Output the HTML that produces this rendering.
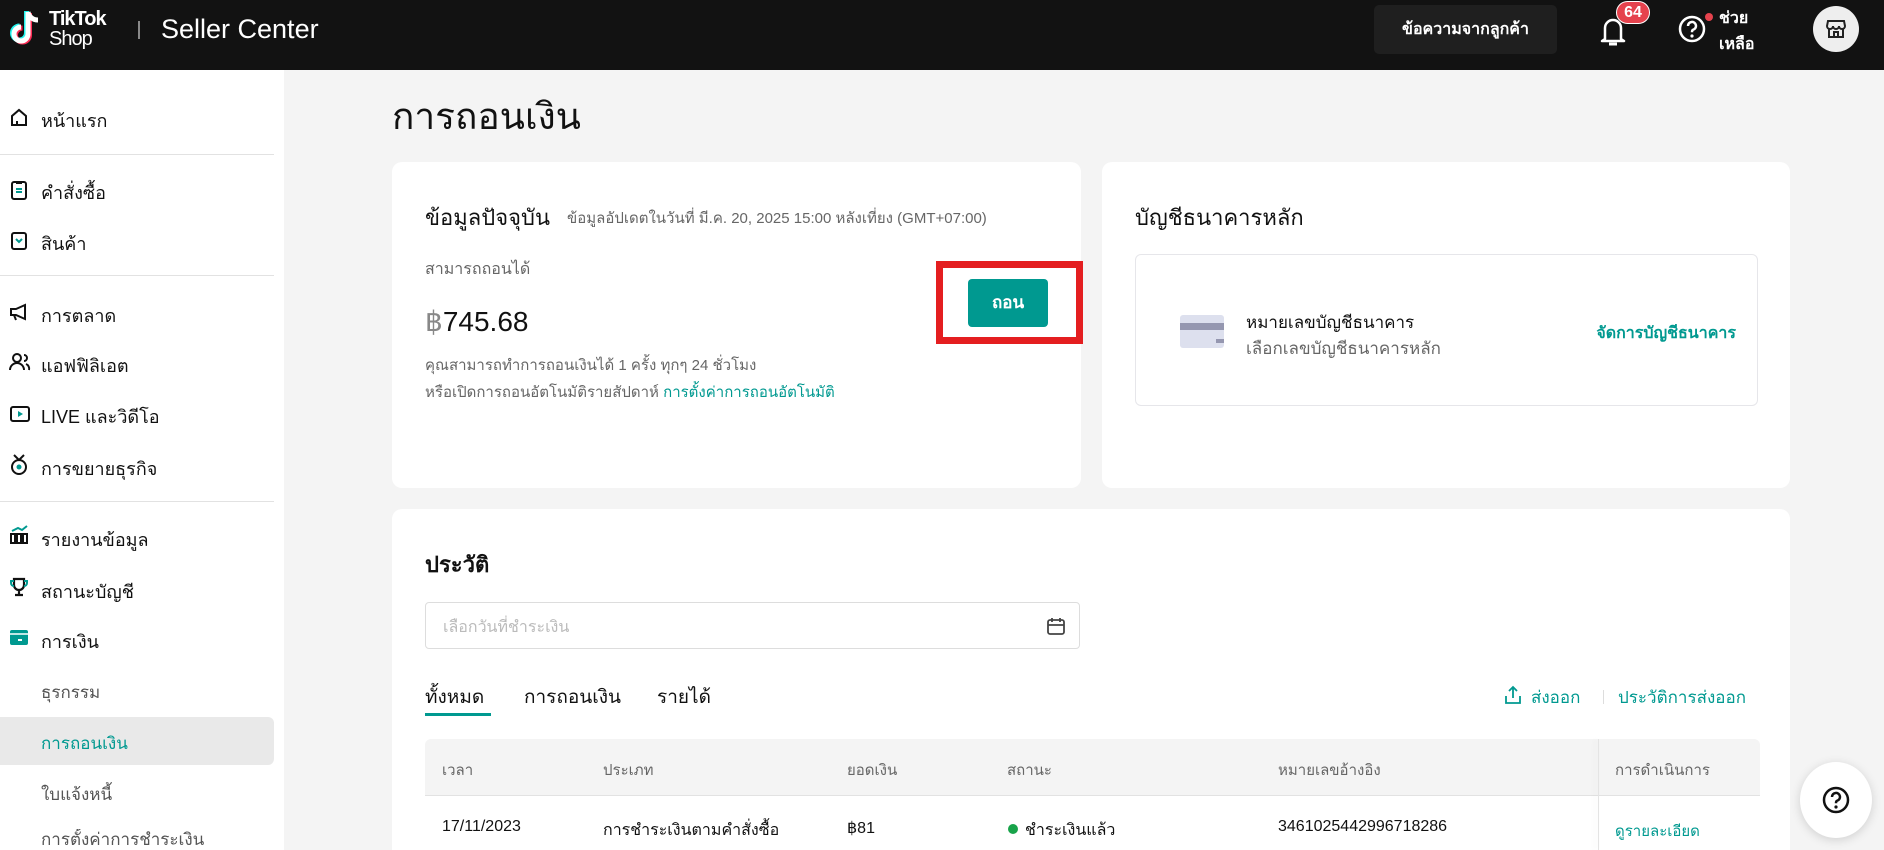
<!DOCTYPE html>
<html style="overflow:hidden;width:1884px;height:850px"><head><meta charset="utf-8">
<style>
*{box-sizing:border-box;margin:0;padding:0}
html,body{overflow:hidden}
body{width:1884px;height:850px;background:#f4f4f4;font-family:"Liberation Sans","Noto Sans CJK SC",sans-serif;color:#111}
#w{position:relative;width:1884px;height:850px;overflow:hidden}
.a{position:absolute;white-space:nowrap}
.hdr{position:absolute;left:0;top:0;width:1884px;height:70px;background:#121212}
.side{position:absolute;left:0;top:70px;width:284px;height:780px;background:#fff;overflow:hidden}
.si{position:absolute;left:41px;font-size:18px;color:#111}
.ic{position:absolute;left:9px}
.div{position:absolute;left:0;width:274px;height:1px;background:#e2e2e2}
.card{position:absolute;background:#fff;border-radius:10px;overflow:hidden}
.g{color:#666}
.t{color:#009990}
</style></head><body><div id="w">
<div class="hdr">
 <svg class="a" style="left:10px;top:9px" width="34" height="40" viewBox="0 0 34 40"><path d="M18 3v22a7 7 0 1 1-7-7" fill="none" stroke="#25f4ee" stroke-width="5" transform="translate(-1.5,-1)"/><path d="M18 3v22a7 7 0 1 1-7-7" fill="none" stroke="#fe2c55" stroke-width="5" transform="translate(1.5,1)"/><path d="M18 3v22a7 7 0 1 1-7-7M18 3c1 5 5 8 10 8" fill="none" stroke="#fff" stroke-width="5"/></svg>
 <div class="a" style="left:49px;top:10px;color:#fff;font-size:20px;font-weight:bold;line-height:19px;letter-spacing:-1px">TikTok</div>
 <div class="a" style="left:49px;top:29px;color:#fff;font-size:20px;line-height:20px;letter-spacing:-1px">Shop</div>
 <div class="a" style="left:138px;top:21px;width:2px;height:18px;background:#888"></div>
 <div class="a" style="left:161px;top:12px;color:#fff;font-size:27px;line-height:34px">Seller Center</div>
 <div class="a" style="left:1374px;top:5px;width:183px;height:49px;background:#1f1f1f;border-radius:5px;color:#fff;font-size:16px;font-weight:bold;text-align:center;line-height:49px">ข้อความจากลูกค้า</div>
 <svg class="a" style="left:1597px;top:14px" width="32" height="34" viewBox="0 0 32 34"><path d="M8 25V14a8 8 0 0 1 16 0v11l3 2H5z" fill="none" stroke="#fff" stroke-width="2.5" stroke-linejoin="round"/><path d="M12 30h8" stroke="#fff" stroke-width="3"/></svg>
 <div class="a" style="left:1616px;top:1px;width:34px;height:23px;background:#e5424d;border-radius:12px;color:#fff;font-size:16px;font-weight:bold;text-align:center;line-height:21px;border:1px solid #fff">64</div>
 <svg class="a" style="left:1676px;top:13px" width="32" height="32" viewBox="0 0 32 32"><circle cx="16" cy="16" r="12" fill="none" stroke="#fff" stroke-width="2.5"/><path d="M12 13a4 4 0 1 1 5 3.8c-1 .4-1 1.2-1 2.5" fill="none" stroke="#fff" stroke-width="2.5"/><circle cx="16" cy="23" r="1.6" fill="#fff"/></svg>
 <div class="a" style="left:1705px;top:13px;width:8px;height:8px;border-radius:50%;background:#e5424d"></div>
 <div class="a" style="left:1719px;top:6px;color:#fff;font-size:16px;font-weight:bold;line-height:26px">ช่วย<br>เหลือ</div>
 <div class="a" style="left:1813px;top:6px;width:46px;height:46px;border-radius:50%;background:#eee"></div>
 <svg class="a" style="left:1824px;top:17px" width="24" height="24" viewBox="0 0 24 24"><path d="M4 4h16l1 5a3 3 0 0 1-6 0 3 3 0 0 1-6 0 3 3 0 0 1-6 0zM5 11v9h14v-9M10 20v-5h4v5" fill="none" stroke="#222" stroke-width="2"/></svg>
</div>

<div class="side">
 <svg class="ic" style="top:38px" width="20" height="20" viewBox="0 0 20 20"><path d="M3 17V8l7-6 7 6v9zM8 17v-4" fill="none" stroke="#111" stroke-width="2"/></svg>
 <div class="si" style="top:36px">หน้าแรก</div>
 <div class="div" style="top:84px"></div>
 <svg class="ic" style="top:109px" width="20" height="22" viewBox="0 0 20 22"><rect x="3" y="3" width="14" height="17" rx="2" fill="none" stroke="#111" stroke-width="2"/><path d="M7 2h6v3H7z" fill="#111"/><path d="M7 10h6M7 13h6" stroke="#009990" stroke-width="2"/></svg>
 <div class="si" style="top:108px">คำสั่งซื้อ</div>
 <svg class="ic" style="top:160px" width="20" height="22" viewBox="0 0 20 22"><rect x="3" y="3" width="14" height="16" rx="2" fill="none" stroke="#111" stroke-width="2"/><path d="M7 9l3 3 3-3" fill="none" stroke="#009990" stroke-width="2"/></svg>
 <div class="si" style="top:159px">สินค้า</div>
 <div class="div" style="top:205px"></div>
 <svg class="ic" style="top:232px" width="20" height="20" viewBox="0 0 20 20"><path d="M2 7h5l9-4v14l-9-4H2zM5 13l2 5" fill="none" stroke="#111" stroke-width="2"/></svg>
 <div class="si" style="top:231px">การตลาด</div>
 <svg class="ic" style="top:282px" width="22" height="20" viewBox="0 0 22 20"><circle cx="8" cy="6" r="4" fill="none" stroke="#111" stroke-width="2"/><path d="M1 18a7 7 0 0 1 14 0M15 3a3 3 0 0 1 0 6M17 12a5 5 0 0 1 3 6" fill="none" stroke="#111" stroke-width="2"/></svg>
 <div class="si" style="top:281px">แอฟฟิลิเอต</div>
 <svg class="ic" style="top:334px" width="22" height="20" viewBox="0 0 22 20"><rect x="2" y="3" width="18" height="14" rx="2" fill="none" stroke="#111" stroke-width="2"/><path d="M9 7l5 3-5 3z" fill="#009990"/></svg>
 <div class="si" style="top:332px">LIVE และวิดีโอ</div>
 <svg class="ic" style="top:384px" width="20" height="22" viewBox="0 0 20 22"><circle cx="10" cy="13" r="7" fill="none" stroke="#111" stroke-width="2"/><path d="M5 1l5 5 5-5" fill="none" stroke="#111" stroke-width="2"/><circle cx="10" cy="13" r="2.5" fill="#009990"/></svg>
 <div class="si" style="top:384px">การขยายธุรกิจ</div>
 <div class="div" style="top:431px"></div>
 <svg class="ic" style="top:455px" width="20" height="20" viewBox="0 0 20 20"><path d="M2 9h4v9H2zM8 9h4v9H8zM14 9h4v9h-4z" fill="none" stroke="#111" stroke-width="2"/><path d="M3 6l6-3 4 2 5-4" fill="none" stroke="#009990" stroke-width="2"/></svg>
 <div class="si" style="top:455px">รายงานข้อมูล</div>
 <svg class="ic" style="top:507px" width="20" height="20" viewBox="0 0 20 20"><path d="M5 2h10v6a5 5 0 0 1-10 0zM10 13v4M6 18h8" fill="none" stroke="#111" stroke-width="2.2"/><path d="M5 4H2v2a3 3 0 0 0 3 3M15 4h3v2a3 3 0 0 1-3 3" fill="none" stroke="#009990" stroke-width="2"/></svg>
 <div class="si" style="top:507px">สถานะบัญชี</div>
 <svg class="ic" style="top:559px" width="20" height="18" viewBox="0 0 20 18"><rect x="1" y="1" width="18" height="15" rx="2" fill="#009990"/><path d="M1 5h18" stroke="#fff" stroke-width="1.5"/><path d="M9 11h4" stroke="#fff" stroke-width="2"/></svg>
 <div class="si" style="top:557px">การเงิน</div>
 <div class="si" style="top:609px;color:#555;font-size:17px">ธุรกรรม</div>
 <div class="a" style="left:0;top:647px;width:274px;height:48px;background:#e9e9e9;border-radius:0 6px 6px 0"></div>
 <div class="si" style="top:660px;color:#009990;font-size:17px">การถอนเงิน</div>
 <div class="si" style="top:711px;color:#555;font-size:17px">ใบแจ้งหนี้</div>
 <div class="si" style="top:759px;color:#555;font-size:17px;line-height:21px;height:21px;overflow:hidden">การตั้งค่าการชำระเงิน</div>
</div>

<div class="a" style="left:392px;top:94px;font-size:37px;line-height:46px">การถอนเงิน</div>

<div class="card" style="left:392px;top:162px;width:689px;height:326px;overflow:visible">
 <div class="a" style="left:33px;top:38px;font-size:22px">ข้อมูลปัจจุบัน</div>
 <div class="a g" style="left:175px;top:44px;font-size:15px">ข้อมูลอัปเดตในวันที่ มี.ค. 20, 2025 15:00 หลังเที่ยง (GMT+07:00)</div>
 <div class="a g" style="left:33px;top:95px;font-size:16px">สามารถถอนได้</div>
 <div class="a" style="left:33px;top:143px;font-size:28px"><span style="color:#888">฿</span>745.68</div>
 <div class="a g" style="left:33px;top:191px;font-size:15px">คุณสามารถทำการถอนเงินได้ 1 ครั้ง ทุกๆ 24 ชั่วโมง</div>
 <div class="a g" style="left:33px;top:218px;font-size:15px">หรือเปิดการถอนอัตโนมัติรายสัปดาห์ <span class="t">การตั้งค่าการถอนอัตโนมัติ</span></div>
 <div class="a" style="left:544px;top:99px;width:147px;height:83px;border:7px solid #e41e20"></div>
 <div class="a" style="left:576px;top:117px;width:80px;height:48px;background:#009990;border-radius:4px;color:#fff;font-weight:bold;font-size:17px;text-align:center;line-height:48px">ถอน</div>
</div>

<div class="card" style="left:1102px;top:162px;width:688px;height:326px">
 <div class="a" style="left:33px;top:38px;font-size:22px">บัญชีธนาคารหลัก</div>
 <div class="a" style="left:33px;top:92px;width:623px;height:152px;border:1px solid #e6e6ea;border-radius:6px">
  <div class="a" style="left:44px;top:60px;width:44px;height:33px;background:#dde0ee;border-radius:3px"></div>
  <div class="a" style="left:44px;top:68px;width:44px;height:7px;background:#9597b0"></div>
  <div class="a" style="left:80px;top:84px;width:8px;height:4px;background:#9597b0"></div>
  <div class="a" style="left:110px;top:54px;font-size:17px">หมายเลขบัญชีธนาคาร</div>
  <div class="a g" style="left:110px;top:80px;font-size:17px">เลือกเลขบัญชีธนาคารหลัก</div>
  <div class="a t" style="right:21px;top:66px;font-size:16px;font-weight:bold">จัดการบัญชีธนาคาร</div>
 </div>
</div>

<div class="card" style="left:392px;top:509px;width:1398px;height:341px;border-radius:10px 10px 0 0">
 <div class="a" style="left:33px;top:38px;font-size:22px;font-weight:bold">ประวัติ</div>
 <div class="a" style="left:33px;top:93px;width:655px;height:47px;border:1px solid #ddd;border-radius:4px">
  <div class="a" style="left:17px;top:12px;font-size:16px;color:#bbb">เลือกวันที่ชำระเงิน</div>
  <svg class="a" style="left:620px;top:13px" width="20" height="20" viewBox="0 0 20 20"><rect x="2" y="4" width="16" height="14" rx="2" fill="none" stroke="#444" stroke-width="1.8"/><path d="M2 9h16M6 2v4M14 2v4" stroke="#444" stroke-width="1.8"/></svg>
 </div>
 <div class="a" style="left:33px;top:173px;font-size:19px">ทั้งหมด</div>
 <div class="a" style="left:33px;top:204px;width:66px;height:3px;background:#009990"></div>
 <div class="a" style="left:132px;top:173px;font-size:19px">การถอนเงิน</div>
 <div class="a" style="left:265px;top:173px;font-size:19px">รายได้</div>
 <svg class="a" style="left:1112px;top:176px" width="18" height="20" viewBox="0 0 18 20"><path d="M9 13V2M5 6l4-4 4 4M2 11v7h14v-7" fill="none" stroke="#009990" stroke-width="1.8"/></svg>
 <div class="a t" style="left:1139px;top:175px;font-size:17px">ส่งออก</div>
 <div class="a" style="left:1211px;top:181px;width:1px;height:14px;background:#ddd"></div>
 <div class="a t" style="left:1226px;top:175px;font-size:17px">ประวัติการส่งออก</div>
 <div class="a" style="left:33px;top:230px;width:1335px;height:57px;background:#f4f4f4;border-radius:6px 6px 0 0;border-bottom:1px solid #e2e2e2"></div>
 <div class="a" style="left:1206px;top:230px;width:1px;height:111px;background:#e4e4e4;box-shadow:-3px 0 6px rgba(0,0,0,.08)"></div>
 <div class="a g" style="left:50px;top:249px;font-size:15px">เวลา</div>
 <div class="a g" style="left:211px;top:249px;font-size:15px">ประเภท</div>
 <div class="a g" style="left:455px;top:249px;font-size:15px">ยอดเงิน</div>
 <div class="a g" style="left:615px;top:249px;font-size:15px">สถานะ</div>
 <div class="a g" style="left:886px;top:249px;font-size:15px">หมายเลขอ้างอิง</div>
 <div class="a g" style="left:1223px;top:249px;font-size:15px">การดำเนินการ</div>
 <div class="a" style="left:50px;top:309px;font-size:16px">17/11/2023</div>
 <div class="a" style="left:211px;top:309px;font-size:16px">การชำระเงินตามคำสั่งซื้อ</div>
 <div class="a" style="left:455px;top:309px;font-size:16px">฿81</div>
 <div class="a" style="left:616px;top:315px;width:10px;height:10px;border-radius:50%;background:#18a34a"></div>
 <div class="a" style="left:633px;top:309px;font-size:16px">ชำระเงินแล้ว</div>
 <div class="a" style="left:886px;top:309px;font-size:16px">3461025442996718286</div>
 <div class="a t" style="left:1223px;top:310px;font-size:15px">ดูรายละเอียด</div>
</div>

<div class="a" style="left:1800px;top:762px;width:72px;height:76px;border-radius:50%;background:#fff;box-shadow:0 2px 10px rgba(0,0,0,.15)"></div>
<svg class="a" style="left:1821px;top:785px" width="30" height="30" viewBox="0 0 30 30"><circle cx="15" cy="15" r="12" fill="none" stroke="#111" stroke-width="2.5"/><path d="M11 12a4 4 0 1 1 5 3.8c-1 .4-1 1.2-1 2.5" fill="none" stroke="#111" stroke-width="2.5"/><circle cx="15" cy="22" r="1.6" fill="#111"/></svg>
</div></body></html>
